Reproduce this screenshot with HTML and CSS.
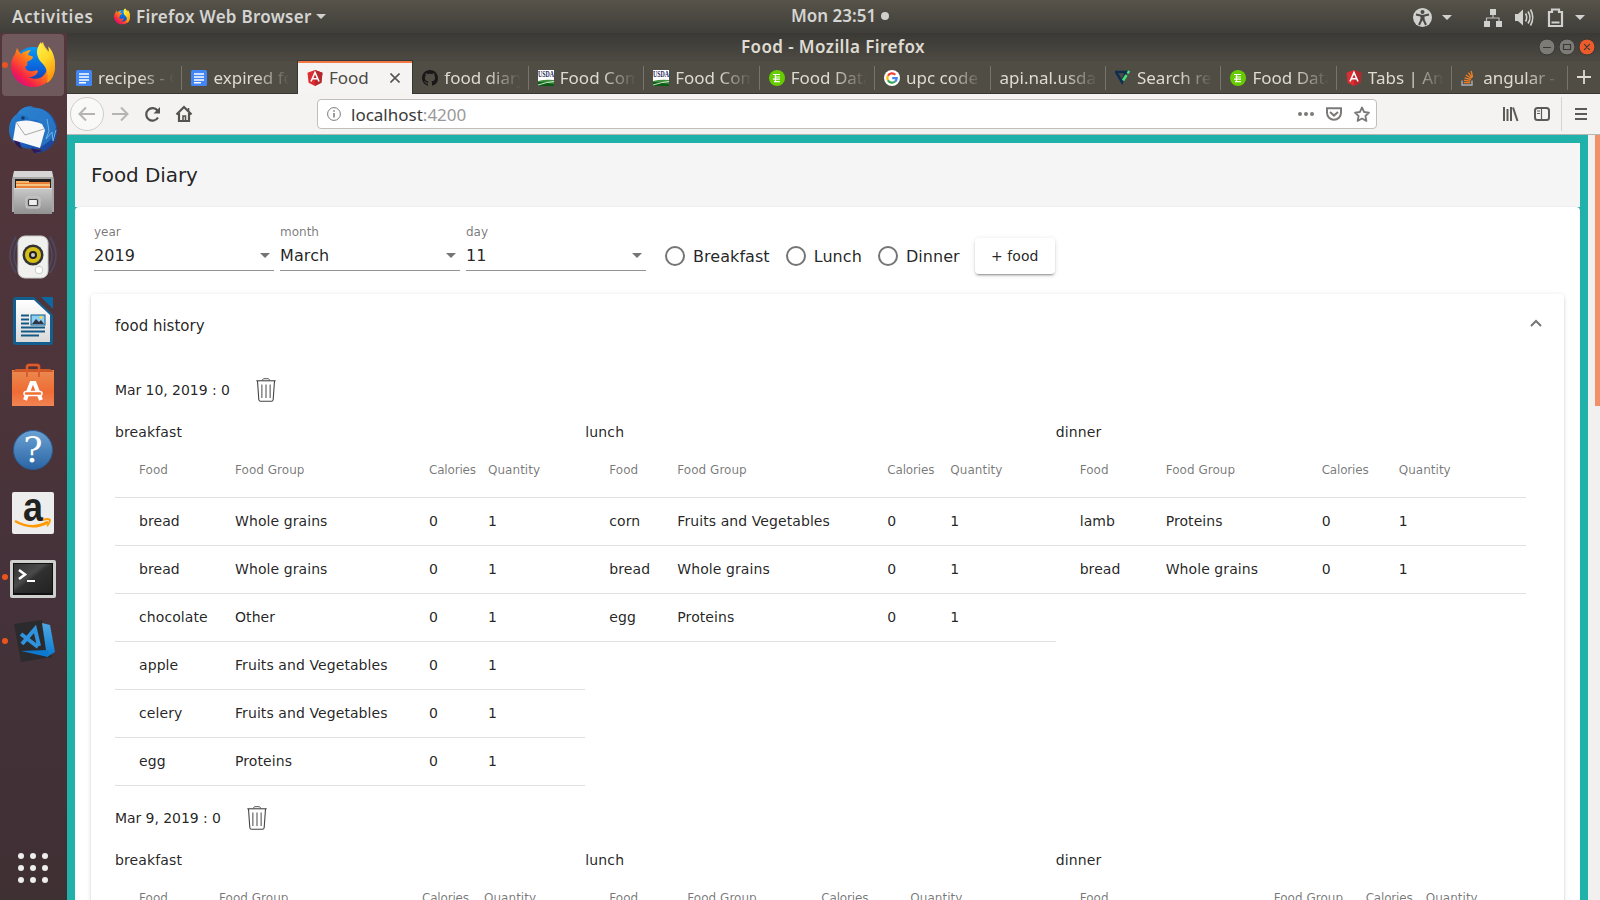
FILE: index.html
```html
<!DOCTYPE html>
<html lang="en">
<head>
<meta charset="utf-8">
<title>Food</title>
<link rel="stylesheet" href="styles.css">
</head>
<body>
<svg width="0" height="0" class="defs" aria-hidden="true">
  <defs>
    <linearGradient id="ffFlame" x1="0.9" y1="0" x2="0.15" y2="0.9"><stop offset="0" stop-color="#fff44f"/><stop offset=".35" stop-color="#ffb515"/><stop offset=".6" stop-color="#ff6a1f"/><stop offset=".85" stop-color="#f5204a"/><stop offset="1" stop-color="#d8127d"/></linearGradient>
    <linearGradient id="ffTail" x1="0" y1="0" x2="0.4" y2="1"><stop offset="0" stop-color="#fff44f"/><stop offset=".5" stop-color="#ffd92a"/><stop offset="1" stop-color="#ff980e"/></linearGradient>
    <linearGradient id="ffGlobe" x1=".5" y1="0" x2=".5" y2="1"><stop offset="0" stop-color="#0a9bf5"/><stop offset=".6" stop-color="#0a5fd8"/><stop offset="1" stop-color="#25318f"/></linearGradient>
    <linearGradient id="tb" x1="0" y1="0" x2="1" y2="1"><stop offset="0" stop-color="#2a8ad0"/><stop offset=".5" stop-color="#1d62c0"/><stop offset="1" stop-color="#1c3b8c"/></linearGradient>
    <linearGradient id="steel" x1="0" y1="0" x2="0" y2="1"><stop offset="0" stop-color="#c9c9c9"/><stop offset="1" stop-color="#919191"/></linearGradient>
    <linearGradient id="bag" x1="0" y1="0" x2="0" y2="1"><stop offset="0" stop-color="#ea8a50"/><stop offset=".6" stop-color="#ef6c34"/><stop offset="1" stop-color="#f28453"/></linearGradient>
    <linearGradient id="help" x1="0" y1="0" x2="0" y2="1"><stop offset="0" stop-color="#6ba2d4"/><stop offset="1" stop-color="#2a65a4"/></linearGradient>
    <linearGradient id="term" x1="0" y1="0" x2="1" y2="1"><stop offset="0" stop-color="#333"/><stop offset=".4" stop-color="#4a4a4a"/><stop offset=".5" stop-color="#303030"/><stop offset="1" stop-color="#222"/></linearGradient>
    <linearGradient id="code" x1="0" y1="0" x2="0" y2="1"><stop offset="0" stop-color="#4fa8e4"/><stop offset="1" stop-color="#0a79d0"/></linearGradient>
    <linearGradient id="paper" x1="0" y1="0" x2="0" y2="1"><stop offset="0" stop-color="#fff"/><stop offset="1" stop-color="#d9d9d9"/></linearGradient>
    <symbol id="firefox" viewBox="0 0 44 46">
      <circle cx="22" cy="24" r="19" fill="url(#ffGlobe)"/>
      <path d="M6 6c1 2 2 4 4 6 3-3 7-4 10-4-2 2-3 4-3 5 2 1 5 1 5 2 0 2-4 4-6 5 1 3 0 4-2 5 1 4 5 5 9 4 2-1 3-1 4 0-1 4-5 6-9 6 5 3 12 2 15-2 6-7 2-14-2-17-5-5-4-11 1-16 1 5 4 7 6 10 0-2 0-4-1-6 5 5 7 12 7 19-1 14-10 22-22 22S0 36 0 24c0-4 1-8 4-12z" fill="url(#ffFlame)"/>
      <path d="M30 0c1 5 4 7 7 11 1-2 1-4 0-6 5 6 7 12 7 20 0 7-3 13-8 16 2-8 0-15-5-20-6-6-7-14-1-21z" fill="url(#ffTail)"/>
    </symbol>
    <symbol id="docs" viewBox="0 0 16 16"><rect width="16" height="16" rx="1.5" fill="#4285f4"/><path d="M3 4h10M3 7h10M3 10h10M3 12.7h7" stroke="#fff" stroke-width="1.5"/></symbol>
    <symbol id="angular" viewBox="0 0 16 16"><path d="M8 0l7.5 2.7-1.1 10L8 16l-6.400-3.300L.5 2.700z" fill="#dd2c32"/><path d="M8 0l7.500 2.700-1.100 10L8 16z" fill="#b3282d"/><path d="M4 11.500L8 2.500l4 9M5.700 8.800h4.600" fill="none" stroke="#fff" stroke-width="1.600"/></symbol>
    <symbol id="github" viewBox="0 0 16 16"><path fill="#191717" d="M8 0C3.580 0 0 3.580 0 8c0 3.540 2.290 6.530 5.470 7.590.4.070.55-.17.55-.38 0-.19-.01-.82-.01-1.490-2.010.37-2.530-.49-2.690-.94-.09-.23-.48-.94-.82-1.130-.28-.15-.68-.52-.01-.53.63-.01 1.080.58 1.230.82.72 1.210 1.870.87 2.330.66.07-.52.28-.87.51-1.070-1.780-.2-3.640-.89-3.640-3.950 0-.87.31-1.590.82-2.150-.08-.2-.36-1.020.08-2.120 0 0 .67-.21 2.200.82.64-.18 1.320-.27 2-.27s1.360.09 2 .27c1.530-1.040 2.200-.82 2.200-.82.44 1.100.16 1.920.08 2.120.51.56.82 1.270.82 2.150 0 3.070-1.870 3.750-3.650 3.950.29.25.54.73.54 1.480 0 1.070-.01 1.930-.01 2.200 0 .21.15.46.55.38A8.010 8.010 0 0 0 16 8c0-4.420-3.580-8-8-8z"/></symbol>
    <symbol id="usda" viewBox="0 0 16 16"><rect width="16" height="16" fill="#fff"/><text x="0" y="6.500" font-family="Liberation Serif" font-weight="700" font-size="7.500" textLength="16" lengthAdjust="spacingAndGlyphs" fill="#1d1d5c">USDA</text><path d="M0 11q8-2 16-1v6H0z" fill="#3c8f3c"/><path d="M0 12q6 0 16 2v2H0z" fill="#0a5c14"/><path d="M0 15q9-3 16-3.500" stroke="#fff" stroke-width=".8" fill="none"/></symbol>
    <symbol id="edamam" viewBox="0 0 16 16"><circle cx="8" cy="8" r="8" fill="#66cc00"/><path d="M4 4.500h7M5.500 7h5.500M4 9.200h7M5 11.700h6M6.500 4v8" stroke="#fff" stroke-width="1.200"/></symbol>
    <symbol id="google" viewBox="0 0 16 16"><circle cx="8" cy="8" r="8" fill="#fff"/><g fill="none" stroke-width="2.200"><path d="M11.300 4.700A4.700 4.700 0 0 0 3.900 5.800" stroke="#ea4335"/><path d="M3.900 5.800a4.700 4.700 0 0 0 0 4.400" stroke="#fbbc05"/><path d="M3.900 10.200a4.700 4.700 0 0 0 7.200 1.300" stroke="#34a853"/><path d="M11.100 11.500A4.700 4.700 0 0 0 12.700 8.100H8.200" stroke="#4285f4"/></g></symbol>
    <symbol id="check" viewBox="0 0 16 16"><path d="M1 2h10L7 12z" fill="none" stroke="#102d50" stroke-width="2.600"/><path d="M8 10.500L11.500 5" stroke="#46e07c" stroke-width="2.600"/><path d="M12.600 3.500l1.600-2.700" stroke="#46e07c" stroke-width="2.400"/></symbol>
    <symbol id="stack" viewBox="0 0 16 16"><path d="M1 10.500v4.500h10v-4.500" fill="none" stroke="#aab0b5" stroke-width="1.400"/><path d="M2.800 12.700h6.400M3 10.400l6.300.7M3.600 7.800l6.200 1.900M5 5l5.400 3.500M7.400 2.700l3.800 5.200M10.200 1l1.300 6" stroke="#f48024" stroke-width="1.300"/></symbol>
    <symbol id="trash" viewBox="0 0 20 24"><path d="M.3 2.800h19.400" stroke="#333" stroke-width="1"/><path d="M6 2.500L7.500.7h5L14 2.500" fill="none" stroke="#555"/><path d="M1.500 3l1.300 18.500q.2 1.700 1.800 1.700h10.800q1.600 0 1.800-1.700L18.500 3" fill="none" stroke="#444" stroke-width="1.100"/><path d="M5.800 6.500v13.500M10 6.500v13.500M14.200 6.500v13.500" stroke="#8d8d8d" stroke-width="1.600"/></symbol>
  </defs>
</svg>

<header class="panel">
  <span class="activities">Activities</span>
  <svg class="panel-app" viewBox="0 0 44 46"><use href="#firefox"/></svg>
  <span class="app-name">Firefox Web Browser</span>
  <i class="caret"></i>
  <span class="clock">Mon 23:51</span><i class="clock-dot"></i>
  <svg class="status" width="200" height="32" viewBox="1400 0 200 32">
    <circle cx="1422.500" cy="16.500" r="9.500" fill="#d0d0ce"/><g stroke="#4a4944" fill="none" stroke-width="2"><path d="M1416 13.500l6.500 1.500 6.500-1.500M1422.500 15v4M1421.800 18l-2.800 6M1423.200 18l2.800 6"/></g><rect x="1420.500" y="14.500" width="4" height="5" fill="#4a4944"/><circle cx="1422.500" cy="11" r="2" fill="#4a4944"/>
    <path d="M1442 14h10l-5 5zM1575 14h10l-5 5z" fill="#d0d0ce"/>
    <g fill="#d0d0ce"><rect x="1490" y="8" width="6" height="6"/><rect x="1484" y="20" width="6" height="6"/><rect x="1496" y="20" width="6" height="6"/></g><path d="M1493 14v3M1486.500 20v-3h12.500v3" fill="none" stroke="#bbb" stroke-width="1.200"/>
    <path d="M1515 13h3l5-4.500v16l-5-4.500h-3z" fill="#d0d0ce"/><path d="M1525.500 12.500q2.500 4 0 8M1528 10.500q4 6 0 12M1530.500 8.500q4.500 8 0 16" fill="none" stroke="#d0d0ce" stroke-width="1.600"/>
    <path d="M1549 11h3V8.500h7V11h3v14h-13z" fill="none" stroke="#d0d0ce" stroke-width="2.200"/><path d="M1551.500 21.500h8" stroke="#d0d0ce" stroke-width="2"/>
  </svg>
</header>

<div class="desktop">
  <nav class="dock">
    <div class="slot"><div class="slot-active"><svg width="44" height="46"><use href="#firefox"/></svg></div><i class="run"></i></div>
    <div class="slot"><svg width="48" height="48" viewBox="0 0 48 48"><path d="M8 9Q14 0 24 1l-3 2C37 1 48 12 48 26 48 40 38 48 26 48l8-4C16 46 0 40 0 25 0 18 3 12 8 9z" fill="url(#tb)"/><path d="M4 33q2 8 9 11l-3-8zM22 43l12 3-9 2z" fill="#2b1b5c"/><path d="M8 9q12 0 12 6 11-2 15 8l-4 19q15-7 16-20-6-18-20-19Q14-1 8 9z" fill="#2e86cf" opacity=".65"/><path d="M7 17q12-4 26 2l3 6-5 18L4 35z" fill="#f8f8f8"/><path d="M7 17l9 13 19-6" fill="none" stroke="#aaa"/><path d="M38 14l2 12-3 8 6-7 1 9 3-11" fill="none" stroke="#6bb6e8" stroke-width="1"/><circle cx="14" cy="13" r="1.800" fill="#153867"/></svg></div>
    <div class="slot"><svg width="44" height="46" viewBox="0 0 44 46"><path d="M3 2h38l2 7v33H1V9z" fill="#a8a8a8"/><path d="M3 1h38l1 6H2z" fill="#d5d5d5"/><rect x="4" y="9" width="36" height="10" fill="#25211f"/><rect x="5" y="12" width="34" height="6" fill="#ec7f37"/><path d="M5 15h34" stroke="#f6dc9d" stroke-width="1.500"/><rect x="5" y="11" width="13" height="2" fill="#f4b266"/><rect x="3" y="18" width="38" height="26" fill="url(#steel)"/><path d="M3 18.500h38" stroke="#ddd"/><rect x="15" y="27" width="14" height="11" rx="2" fill="#b4b4b4" stroke="#ccc"/><rect x="17.500" y="29.500" width="9" height="6" rx="1" fill="#eee" stroke="#444" stroke-width="1.200"/></svg></div>
    <div class="slot"><svg width="48" height="46" viewBox="0 0 48 46"><g fill="none" stroke="#4a5f92" stroke-width="1.500" opacity=".5"><path d="M7 3Q-5 22 7 39M11 4Q-1 22 11 38M41 3Q53 22 41 39M37 4Q49 22 37 38"/></g><rect x="9" y="2" width="30" height="42" rx="7" fill="#f0f0ee" stroke="#ccc"/><circle cx="24" cy="21" r="10.500" fill="#333"/><circle cx="24" cy="21" r="8" fill="#d7bd17"/><circle cx="24" cy="21" r="4" fill="#222"/><circle cx="24" cy="21" r="2" fill="#ccc"/><circle cx="30" cy="36" r="3.800" fill="#fff" stroke="#ccc"/></svg></div>
    <div class="slot"><svg width="40" height="48" viewBox="0 0 40 48"><path d="M3 0h18l19 18v27q0 3-3 3H3q-3 0-3-3V3q0-3 3-3z" fill="#135d8f"/><path d="M28 0h12v12z" fill="#0f679f"/><path d="M3 3h18l16 15v27H3z" fill="url(#paper)"/><path d="M8 18.500h8M8 22.500h8M8 26.500h8M8 30.500h24M8 34.500h24M8 38.500h18" stroke="#155a87" stroke-width="2"/><rect x="18" y="18" width="14" height="10" fill="#8bd0f5" stroke="#155a87"/><path d="M19 27l4-5 3 3 2-2 3 4z" fill="#334"/><circle cx="28" cy="20.500" r="1.500" fill="#ffd94a"/></svg></div>
    <div class="slot"><svg width="42" height="44" viewBox="0 0 42 44"><path d="M15 14V4q0-2 2-2h8q2 0 2 2v10" fill="none" stroke="#c3421a" stroke-width="3"/><path d="M0 7h42v36H0z" fill="url(#bag)"/><path d="M0 9l4-3h34l4 3z" fill="#cf5728"/><path d="M15 14V4q0-2 2-2h8q2 0 2 2v10" fill="none" stroke="#d95b2e" stroke-width="2"/><path d="M13 37l6.500-17h3L29 37" fill="none" stroke="#fff" stroke-width="4"/><rect x="12" y="28.500" width="18" height="4" rx="2" fill="#f0702f" stroke="#fff" stroke-width="1.500"/></svg></div>
    <div class="slot help"><svg width="42" height="42" viewBox="0 0 42 42"><circle cx="21" cy="21" r="19.500" fill="url(#help)" stroke="#2b5d94"/><text class="help-mark" x="21" y="33" text-anchor="middle">?</text></svg></div>
    <div class="slot"><svg width="42" height="42" viewBox="0 0 42 42"><rect width="42" height="42" rx="2" fill="#ededed"/><text class="amazon-mark" x="11" y="28.500" textLength="20" lengthAdjust="spacingAndGlyphs">a</text><path d="M3 29q17 10 33 1" fill="none" stroke="#ff9900" stroke-width="2.600"/><path d="M31 28q6-2 7 0 0 3-3 6" fill="none" stroke="#ff9900" stroke-width="2"/></svg></div>
    <div class="slot low"><svg width="46" height="38" viewBox="0 0 46 38"><rect width="46" height="38" rx="2" fill="#cfcfcd"/><rect x="3" y="3" width="40" height="32" fill="#111"/><rect x="4" y="4" width="38" height="29" fill="url(#term)"/><path d="M9 10l6 4.500L9 19" fill="none" stroke="#fff" stroke-width="2.600"/><path d="M17 21h8" stroke="#fff" stroke-width="2"/></svg><i class="run"></i></div>
    <div class="slot"><svg width="44" height="44" viewBox="0 0 44 44"><path d="M3 5l28-4 10 37-31 5z" fill="#2b2b2d"/><path d="M31 4l8 2 5 27-8 5z" fill="url(#code)"/><path d="M10 32l27-1v7z" fill="#0d7ad0"/><path d="M10 15l17 13M11 25L24 10l4 17" fill="none" stroke="#2e93dc" stroke-width="4"/></svg><i class="run"></i></div>
    <svg class="apps" width="30" height="30" viewBox="0 0 30 30" fill="#eee"><circle cx="3" cy="3" r="3"/><circle cx="15" cy="3" r="3"/><circle cx="27" cy="3" r="3"/><circle cx="3" cy="15" r="3"/><circle cx="15" cy="15" r="3"/><circle cx="27" cy="15" r="3"/><circle cx="3" cy="27" r="3"/><circle cx="15" cy="27" r="3"/><circle cx="27" cy="27" r="3"/></svg>
  </nav>

  <section class="window">
    <div class="titlebar">
      <span class="win-title">Food - Mozilla Firefox</span>
      <svg class="win-buttons" width="60" height="20" viewBox="0 0 60 20"><g stroke="#383733"><circle cx="10" cy="10" r="8" fill="#7d7b75"/><circle cx="30" cy="10" r="8" fill="#7d7b75"/><circle cx="50" cy="10" r="8" fill="#eb5b2c"/></g><path d="M6 10.500h8M26.500 7.500h7v5h-7zM47.200 7.200l5.600 5.600M52.800 7.200l-5.600 5.600" fill="none" stroke="#3a3935" stroke-width="1.200"/></svg>
    </div>
    <div class="tabs">
      <div class="tab"><svg><use href="#docs"/></svg><span>recipes - G</span></div>
      <div class="tab nosep"><svg><use href="#docs"/></svg><span>expired fo</span></div>
      <div class="tab active"><svg><use href="#angular"/></svg><span>Food</span><svg class="close" viewBox="0 0 10 10"><path d="M.5.5l9 9M9.500.5l-9 9" stroke="#555" stroke-width="1.600"/></svg></div>
      <div class="tab"><svg><use href="#github"/></svg><span>food diary</span></div>
      <div class="tab"><svg><use href="#usda"/></svg><span>Food Com</span></div>
      <div class="tab"><svg><use href="#usda"/></svg><span>Food Com</span></div>
      <div class="tab"><svg><use href="#edamam"/></svg><span>Food Data</span></div>
      <div class="tab"><svg><use href="#google"/></svg><span>upc code</span></div>
      <div class="tab"><span>api.nal.usda.</span></div>
      <div class="tab"><svg><use href="#check"/></svg><span>Search res</span></div>
      <div class="tab"><svg><use href="#edamam"/></svg><span>Food Data</span></div>
      <div class="tab"><svg><use href="#angular"/></svg><span>Tabs | Ang</span></div>
      <div class="tab"><svg><use href="#stack"/></svg><span>angular - H</span></div>
      <svg class="newtab" viewBox="0 0 14 14"><path d="M7 0v14M0 7h14" stroke="#dfdbd2" stroke-width="1.800"/></svg>
    </div>
    <div class="toolbar">
      <svg class="nav-icons" width="140" height="40" viewBox="67 94 140 40" fill="none">
        <circle cx="87" cy="114" r="16.500" fill="#f9f9f8" stroke="#cfcdca"/>
        <path d="M95 114H80M86 107.500l-6.500 6.500 6.500 6.500" stroke="#b5b4b2" stroke-width="2"/>
        <path d="M112 114h15M121 107.500l6.500 6.500-6.500 6.500" stroke="#b5b4b2" stroke-width="2"/>
        <path d="M157.500 110.500A6.300 6.300 0 1 0 158 117.500" stroke="#55534f" stroke-width="2.200"/><path d="M160 107v6.500h-6.500z" fill="#55534f"/>
        <path d="M176.500 114.500l7.500-7.500 7.500 7.500M179 113v8h10v-8" stroke="#55534f" stroke-width="2.200"/><path d="M183 121v-5h2.500v5M188.500 108v3" stroke="#55534f" stroke-width="1.600"/>
      </svg>
      <div class="urlbar">
        <svg class="info" viewBox="0 0 14 14" fill="none" stroke="#7b7a78"><circle cx="7" cy="7" r="6.400"/><path d="M7 6v4.500M7 3.200v1.500" stroke-width="1.500"/></svg>
        <span class="host">localhost</span><span class="port">:4200</span>
        <svg class="url-actions" width="74" height="20" viewBox="1297 104 74 20" fill="none" stroke="#7b7a78" stroke-width="2"><g fill="#7b7a78" stroke="none"><circle cx="1300" cy="114" r="2"/><circle cx="1306" cy="114" r="2"/><circle cx="1312" cy="114" r="2"/></g><path d="M1327 108.300h14v4.500a7 7 0 0 1-14 0zM1330 112l4 3.600 4-3.600"/><path d="M1362 107.500l2.100 4.500 4.900.6-3.600 3.400 1 4.900-4.400-2.400-4.400 2.400 1-4.900-3.600-3.400 4.900-.6z" stroke-linejoin="round" stroke-width="1.800"/></svg>
      </div>
      <svg class="tool-icons" width="100" height="40" viewBox="1500 94 100 40" fill="none" stroke="#5c5a57" stroke-width="2"><path d="M1504 107v14M1507.500 109v12M1511 107v14M1513 107.500l4.500 13.500"/><rect x="1535" y="108" width="14" height="12" rx="2.500"/><path d="M1541.500 108v12" stroke-width="1.200"/><path d="M1537 111h3M1537 113.500h3" stroke-width="1.200"/><path d="M1561.500 97v34" stroke="#d6d4d1" stroke-width="1"/><path d="M1575 109h12M1575 114h12M1575 119h12"/></svg>
    </div>

    <div class="viewport">
      <main class="page">
        <h1 class="app-title">Food Diary</h1>
        <div class="card">
          <form class="entry">
            <div class="field"><label>year</label><div class="value">2019<i></i></div></div>
            <div class="field"><label>month</label><div class="value">March<i></i></div></div>
            <div class="field"><label>day</label><div class="value">11<i></i></div></div>
            <div class="radios"><span class="radio"><i></i><b>Breakfast</b></span><span class="radio"><i></i><b>Lunch</b></span><span class="radio"><i></i><b>Dinner</b></span></div>
            <button type="button" class="add">+ food</button>
          </form>
          <section class="history">
            <div class="history-head">food history<svg width="12" height="8" viewBox="0 0 12 8"><path d="M1 7l5-5 5 5" fill="none" stroke="#757575" stroke-width="2"/></svg></div>
            <article class="day">
              <div class="date">Mar 10, 2019 : 0<svg width="20" height="24"><use href="#trash"/></svg></div>
              <div class="meals">
                <div class="meal b1"><h2>breakfast</h2>
                  <div class="row head"><span>Food</span><span>Food Group</span><span class="cal">Calories</span><span>Quantity</span></div>
                  <div class="row"><span>bread</span><span>Whole grains</span><span>0</span><span>1</span></div>
                  <div class="row"><span>bread</span><span>Whole grains</span><span>0</span><span>1</span></div>
                  <div class="row"><span>chocolate</span><span>Other</span><span>0</span><span>1</span></div>
                  <div class="row"><span>apple</span><span>Fruits and Vegetables</span><span>0</span><span>1</span></div>
                  <div class="row"><span>celery</span><span>Fruits and Vegetables</span><span>0</span><span>1</span></div>
                  <div class="row"><span>egg</span><span>Proteins</span><span>0</span><span>1</span></div>
                </div>
                <div class="meal l1"><h2>lunch</h2>
                  <div class="row head"><span>Food</span><span>Food Group</span><span class="cal">Calories</span><span>Quantity</span></div>
                  <div class="row"><span>corn</span><span>Fruits and Vegetables</span><span>0</span><span>1</span></div>
                  <div class="row"><span>bread</span><span>Whole grains</span><span>0</span><span>1</span></div>
                  <div class="row"><span>egg</span><span>Proteins</span><span>0</span><span>1</span></div>
                </div>
                <div class="meal d1"><h2>dinner</h2>
                  <div class="row head"><span>Food</span><span>Food Group</span><span class="cal">Calories</span><span>Quantity</span></div>
                  <div class="row"><span>lamb</span><span>Proteins</span><span>0</span><span>1</span></div>
                  <div class="row"><span>bread</span><span>Whole grains</span><span>0</span><span>1</span></div>
                </div>
              </div>
            </article>
            <article class="day">
              <div class="date">Mar 9, 2019 : 0<svg width="20" height="24"><use href="#trash"/></svg></div>
              <div class="meals">
                <div class="meal b2"><h2>breakfast</h2><div class="row head"><span>Food</span><span>Food Group</span><span class="cal">Calories</span><span>Quantity</span></div></div>
                <div class="meal l2"><h2>lunch</h2><div class="row head"><span>Food</span><span>Food Group</span><span class="cal">Calories</span><span>Quantity</span></div></div>
                <div class="meal d2"><h2>dinner</h2><div class="row head"><span>Food</span><span>Food Group</span><span class="cal">Calories</span><span>Quantity</span></div></div>
              </div>
            </article>
          </section>
        </div>
      </main>
      <div class="scrollbar"><div class="thumb"></div></div>
    </div>
  </section>
</div>
</body>
</html>
```
FILE: styles.css
```css
* { box-sizing: border-box; }
html, body { margin: 0; height: 900px; overflow: hidden; }
body { width: 1600px; font-family: "DejaVu Sans", sans-serif; color: rgba(0, 0, 0, .87); display: flex; flex-direction: column; }
svg { display: block; flex: none; }
.defs { position: absolute; }

/* top panel */
.panel { height: 33px; flex: none; display: flex; align-items: center; background: linear-gradient(#57534a, #3f3e39); color: #d4d4d2; font: 600 17px/32px "Noto Sans", sans-serif; white-space: nowrap; }
.activities { width: 102px; padding-left: 12px; letter-spacing: .55px; }
.panel-app { width: 16px; height: 17px; margin-left: 12px; }
.app-name { margin-left: 6px; width: 176px; letter-spacing: .27px; }
.caret { width: 0; margin-left: 4px; border: 5px solid transparent; border-top-color: #d0d0ce; border-bottom: 0; }
.clock { margin-left: 465px; width: 86px; padding-bottom: 1px; }
.clock-dot { width: 8px; height: 8px; margin: 0 0 1px 4px; border-radius: 50%; background: #d0d0ce; }
.status { margin-left: auto; }

.desktop { flex: 1; min-height: 0; display: flex; }

/* dock */
.dock { width: 67px; flex: none; display: flex; flex-direction: column; background: linear-gradient(#53373c, #4b343a 45%, #45323a 65%, #3f3034); }
.slot { height: 64px; flex: none; width: 66px; display: flex; align-items: center; justify-content: center; position: relative; }
.slot.low { padding-top: 4px; }
.slot.help { padding-top: 2px; }
.slot-active { width: 62px; height: 62px; border-radius: 4px; background: #70595d; display: flex; align-items: center; justify-content: center; }
.run { position: absolute; left: 2px; top: 29px; width: 6px; height: 6px; border-radius: 50%; background: #e95420; }
.help-mark { font: 36px "DejaVu Serif", serif; fill: #fff; }
.amazon-mark { font: 700 40px "Liberation Sans", sans-serif; fill: #222; }
.apps { margin: auto 0 17px 18px; }

/* browser chrome */
.window { flex: 1; min-width: 0; display: flex; flex-direction: column; }
.titlebar { height: 28px; flex: none; display: flex; align-items: center; background: linear-gradient(#3a3935, #4d4a43); color: #dfdbd2; }
.win-title { margin-left: 674px; font: 600 17px/28px "Noto Sans", sans-serif; letter-spacing: .4px; white-space: nowrap; width: 200px; }
.win-buttons { margin-left: auto; margin-right: 3px; }
.tabs { height: 33px; flex: none; display: flex; align-items: center; background: #504d45; border-bottom: 1px solid #383733; font: 17px/30px "Noto Sans", sans-serif; color: #dfdbd2; }
.tab { width: 115.45px; height: 33px; flex: none; display: flex; align-items: center; padding: 1px 4px 0 9px; position: relative; }
.tab::after { content: ""; width: 1px; height: 24px; position: absolute; right: 0; top: 5px; background: #77746d; }
.tab.nosep::after, .tab.active::after { display: none; }
.tab svg { width: 16px; height: 16px; margin-right: 6px; }
.tab span { flex: 1; min-width: 0; overflow: hidden; white-space: nowrap; -webkit-mask-image: linear-gradient(90deg, #000 calc(100% - 38px), transparent calc(100% - 4px)); mask-image: linear-gradient(90deg, #000 calc(100% - 38px), transparent calc(100% - 4px)); }
.tab.active { width: 114.45px; margin-right: 1px; background: #f5f4f2; color: #4c4a46; border-top: 2px solid #f07746; height: 33px; margin-top: 1px; padding: 0 4px 2px 9px; box-shadow: 0 0 0 1px #383733; clip-path: inset(-1px -1px 0 -1px); }
.tab.active span { -webkit-mask-image: none; mask-image: none; }
.tab .close { width: 10px; height: 10px; margin-right: 8px; }
.newtab { width: 14px; height: 14px; margin: 0 0 0 9px; }
.toolbar { height: 41px; flex: none; display: flex; align-items: flex-start; background: #f4f3f1; border-bottom: 1px solid #b8b6b3; }
.urlbar { margin: 5px 0 0 110px; width: 1060px; height: 30px; background: #fff; border: 1px solid #c1bfbc; border-radius: 4px; display: flex; align-items: center; font: 17px/28px "Noto Sans", sans-serif; color: #3a3a3a; }
.info { width: 14px; height: 14px; margin: 0 10px 0 9px; }
.host, .port { padding-top: 2px; }
.port { color: #999; }
.url-actions { margin-left: auto; margin-right: 5px; }
.tool-icons { margin-left: auto; }

/* page */
.viewport { flex: 1; min-height: 0; display: flex; overflow: hidden; }
.page { width: 1521px; border: 8px solid #20b2aa; border-bottom: 0; background: #20b2aa; overflow: hidden; }
.scrollbar { flex: 1; background: #f1f0ee; display: flex; justify-content: flex-end; align-items: flex-start; }
.thumb { width: 5px; height: 271px; background: #f2906a; }
.app-title { margin: 0; height: 64px; padding: 0 16px; background: #f5f5f5; font-weight: 400; font-size: 20px; line-height: 64px; letter-spacing: -.07px; }
.card { height: 1200px; padding: 0 16px; background: #fff; border-radius: 4px; box-shadow: 0 2px 1px -1px rgba(0,0,0,.2), 0 1px 1px rgba(0,0,0,.14), 0 1px 3px rgba(0,0,0,.12); }
.entry { height: 87px; display: flex; padding-left: 3px; }
.field { width: 180px; height: 64px; margin-right: 6px; padding-top: 16px; border-bottom: 1px solid #949494; }
.field label { display: block; font-size: 12px; line-height: 18px; color: rgba(0, 0, 0, .54); }
.value { display: flex; align-items: center; justify-content: space-between; font-size: 16px; line-height: 20px; margin-top: 5px; letter-spacing: .1px; }
.value i { border: 5px solid transparent; border-top-color: #757575; border-bottom: 0; margin: -2px 4px 0 0; }
.radios { display: flex; margin: 39px 0 0 13px; height: 20px; gap: 16px; }
.radio { display: flex; align-items: center; gap: 8px; font-size: 16px; line-height: 20px; letter-spacing: .06px; }
.radio b { font-weight: 400; padding-top: 2px; }
.radio i { width: 20px; height: 20px; border: 2px solid #757575; border-radius: 50%; }
.add { margin: 31px 0 0 15px; width: 80px; height: 36px; padding: 0; background: #fff; border: 0; border-radius: 4px; font: 14px "DejaVu Sans", sans-serif; letter-spacing: .08px; color: rgba(0,0,0,.87); box-shadow: 0 3px 1px -2px rgba(0,0,0,.2), 0 2px 2px rgba(0,0,0,.14), 0 1px 5px rgba(0,0,0,.12); }
.history { height: 1000px; border-radius: 4px; padding: 0 38px 0 24px; box-shadow: 0 3px 1px -2px rgba(0,0,0,.2), 0 2px 2px rgba(0,0,0,.14), 0 1px 5px rgba(0,0,0,.12); }
.history-head { height: 76px; padding-bottom: 12px; display: flex; align-items: center; justify-content: space-between; font-size: 15px; }
.history-head svg { margin: -6px -16px 0 0; }
.day { height: 428px; font-size: 14px; }
.date { height: 42px; padding-bottom: 2px; display: flex; align-items: center; gap: 26px; letter-spacing: -.06px; }
.meals { display: grid; grid-template-columns: repeat(3, 1fr); align-items: start; }
.meal h2 { margin: 0; height: 30px; padding-top: 10px; font-weight: 400; font-size: 14px; line-height: 20px; letter-spacing: .12px; }
.row { height: 48px; padding: 0 0 2px 24px; display: grid; grid-template-columns: var(--cols); align-items: center; border-bottom: 1px solid #e0e0e0; white-space: nowrap; letter-spacing: .08px; }
.row.head { height: 56px; padding-bottom: 0; font-size: 12px; color: rgba(0, 0, 0, .54); letter-spacing: .03px; }
.row .cal { letter-spacing: -.18px; }
.b1 { --cols: 96px 194px 59px 1fr; }
.l1 { --cols: 68px 210px 63px 1fr; }
.d1 { --cols: 86px 156px 77px 1fr; }
.b2 { --cols: 80px 203px 62px 1fr; }
.l2 { --cols: 78px 134px 89px 1fr; }
.d2 { --cols: 194px 92px 60px 1fr; }
```
